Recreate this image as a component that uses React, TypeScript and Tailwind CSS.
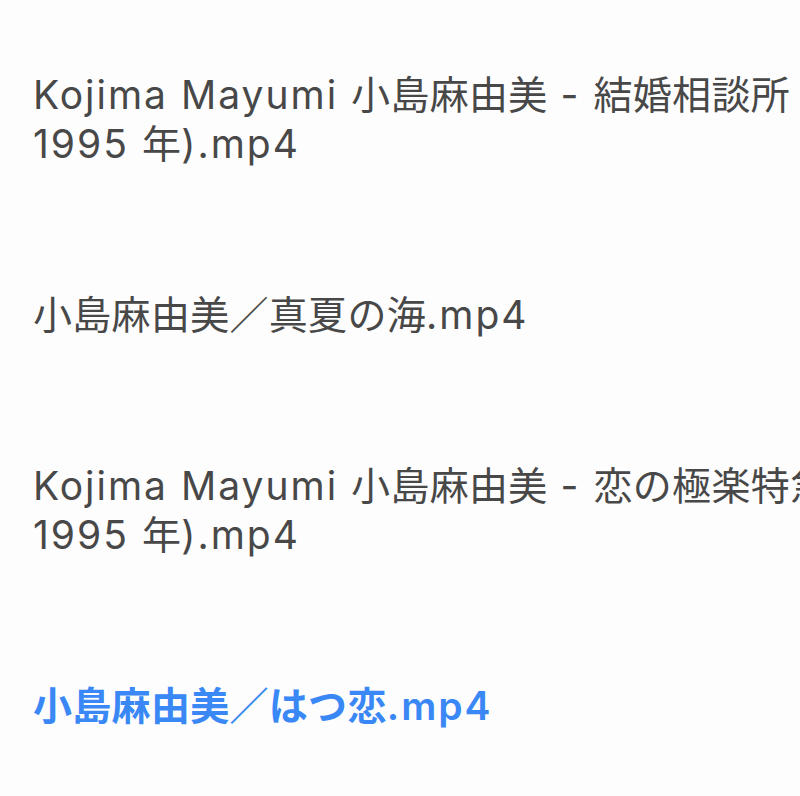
import React from 'react';

type Item = {
  lines: string[];
  current?: boolean;
};

const ITEMS: Item[] = [
  { lines: ['Kojima Mayumi 小島麻由美 - 結婚相談所 (Live at Shibuya', '1995 年).mp4'] },
  { lines: ['小島麻由美／真夏の海.mp4'] },
  { lines: ['Kojima Mayumi 小島麻由美 - 恋の極楽特急 (Live at Shibuya', '1995 年).mp4'] },
  { lines: ['小島麻由美／はつ恋.mp4'], current: true },
];

// latin runs are a touch wider than the cjk runs in the source, so split them
const CJK = /([\u3000-\u30ff\u4e00-\u9fff\uff00-\uffef]+)/;

const Line = ({ text }: { text: string }) => (
  <div className="whitespace-nowrap h-[49px]">
    {text.split(CJK).filter(Boolean).map((part, k) =>
      CJK.test(part) ? (
        <span key={k} className="tracking-[0.3px]">{part}</span>
      ) : (
        <span key={k} className="tracking-[2px]">{part}</span>
      )
    )}
  </div>
);

export default function App() {
  return (
    <div
      className="w-[800px] h-[796px] overflow-hidden bg-[#fdfdfd]"
      style={{ fontFamily: 'Inter, "Noto Sans CJK JP", sans-serif' }}
    >
      <ul className="flex flex-col gap-[122px] pt-[70px] pl-[33px]">
        {ITEMS.map((item, i) => (
          <li
            key={i}
            className={`text-[39px] leading-[49px] ${
              item.current ? 'text-[#3a88f6] font-semibold' : 'text-[#484848]'
            }`}
          >
            {item.lines.map((line, j) => (
              <Line key={j} text={line} />
            ))}
          </li>
        ))}
      </ul>
    </div>
  );
}
